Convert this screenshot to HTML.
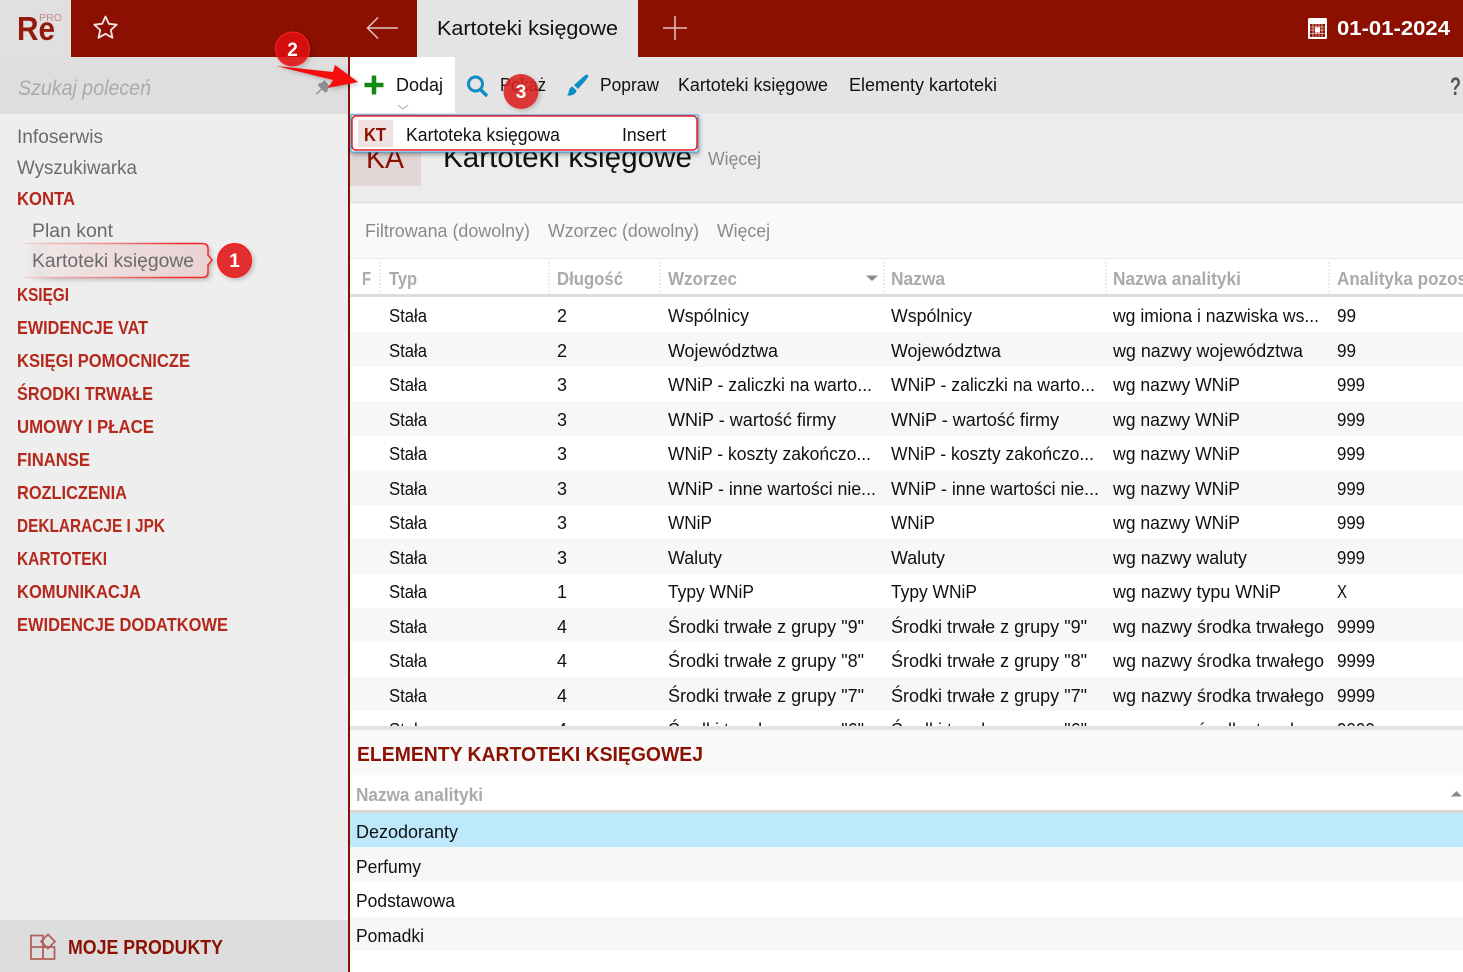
<!DOCTYPE html>
<html lang="pl"><head><meta charset="utf-8"><title>Kartoteki księgowe</title>
<style>
html,body{margin:0;padding:0;background:#fff;width:1463px;height:972px;overflow:hidden}
svg{display:block;position:absolute;left:0;top:0}
text{font-family:"Liberation Sans",sans-serif;font-size:18px;fill:#111;white-space:pre}
.n{fill:#6b6b6b;font-size:19px}
.k{fill:#b5281c;font-size:18px;font-weight:bold;stroke:none}
.h{fill:#aaa;font-size:18px;font-weight:bold}
.f{fill:#8a8a8a;font-size:18px}
</style></head><body>
<svg width="1463" height="972" viewBox="0 0 1463 972" lengthAdjust="spacingAndGlyphs">
<defs>
<linearGradient id="g1" gradientUnits="userSpaceOnUse" x1="24" x2="208" y1="0" y2="0"><stop offset="0" stop-color="#f0e4e4" stop-opacity="0"/><stop offset=".15" stop-color="#f0e4e4"/><stop offset="1" stop-color="#e9d2d2"/></linearGradient>
<linearGradient id="g2" gradientUnits="userSpaceOnUse" x1="24" x2="208" y1="0" y2="0"><stop offset="0" stop-color="#f02a2a" stop-opacity=".1"/><stop offset=".45" stop-color="#f02a2a" stop-opacity=".45"/><stop offset=".85" stop-color="#f02a2a"/></linearGradient>
<filter id="sh" x="-20%" y="-30%" width="140%" height="170%"><feDropShadow dx="1" dy="2" stdDeviation="2.500" flood-color="#000" flood-opacity=".35"/></filter>
<filter id="sh2" x="-20%" y="-40%" width="140%" height="180%"><feDropShadow dx="2" dy="2" stdDeviation="2" flood-color="#000" flood-opacity=".22"/></filter>
<clipPath id="r13"><rect x="350" y="711" width="1113" height="15"/></clipPath>
<clipPath id="c5"><rect x="1330" y="259" width="133" height="40"/></clipPath>
</defs>

<!-- backgrounds -->
<rect x="0" y="0" width="1463" height="57" fill="#8b1002"/>
<rect x="0" y="0" width="71" height="57" fill="#e0e0e0"/>
<rect x="417" y="0" width="221" height="57" fill="#e4e4e4"/>
<rect x="0" y="57" width="348" height="57" fill="#dedede"/>
<rect x="0" y="114" width="348" height="806" fill="#eeeeee"/>
<rect x="0" y="920" width="348" height="52" fill="#dddddd"/>
<rect x="348" y="57" width="2" height="915" fill="#8b1002"/>
<rect x="350" y="57" width="1113" height="56" fill="#e4e4e4"/>
<rect x="350" y="57" width="105" height="57" fill="#ffffff"/>
<rect x="350" y="113" width="1113" height="89" fill="#ececec"/>
<rect x="350" y="202" width="1113" height="1" fill="#dcdcdc"/>
<rect x="350" y="203" width="1113" height="55" fill="#f9f9f9"/>
<rect x="350" y="258" width="1113" height="1" fill="#eaeaea"/>
<rect x="350" y="259" width="1113" height="467" fill="#ffffff"/>
<rect x="350" y="294" width="1113" height="3" fill="#dddddd"/>
<rect x="350" y="332" width="1113" height="35" fill="#f7f7f7"/>
<rect x="350" y="401" width="1113" height="35" fill="#f7f7f7"/>
<rect x="350" y="470" width="1113" height="35" fill="#f7f7f7"/>
<rect x="350" y="539" width="1113" height="35" fill="#f7f7f7"/>
<rect x="350" y="608" width="1113" height="34" fill="#f7f7f7"/>
<rect x="350" y="677" width="1113" height="34" fill="#f7f7f7"/>
<rect x="350" y="726" width="1113" height="4" fill="#e3e3e3"/>
<rect x="350" y="730" width="1113" height="45" fill="#f9f9f9"/>
<rect x="350" y="775" width="1113" height="35" fill="#ffffff"/>
<rect x="350" y="810" width="1113" height="3" fill="#d9d9d9"/>
<rect x="350" y="813" width="1113" height="34" fill="#bee9fd"/>
<rect x="350" y="847" width="1113" height="125" fill="#ffffff"/>
<rect x="350" y="847" width="1113" height="35" fill="#f7f7f7"/>
<rect x="350" y="917" width="1113" height="34" fill="#f7f7f7"/>

<!-- top bar -->
<text x="17" y="40" style="font-size:33px;fill:#941a0e" textLength="38" lengthAdjust="spacingAndGlyphs" font-weight="bold">Re</text>
<text x="39" y="21" style="font-size:10.500px;fill:#c98a85" textLength="23" lengthAdjust="spacingAndGlyphs">PRO</text>
<path d="M105.500 16.500l3.300 7.300 7.900.9-5.900 5.300 1.700 7.800-7-4-7 4 1.700-7.800-5.900-5.300 7.900-.9z" fill="none" stroke="#f3e3e1" stroke-width="1.800" stroke-linejoin="round"/>
<path d="M398 28H368M378 17.500L367.500 28 378 38.500" fill="none" stroke="#e3c3bf" stroke-width="1.500"/>
<text x="437" y="35" style="font-size:20px;fill:#111" textLength="181" lengthAdjust="spacingAndGlyphs">Kartoteki księgowe</text>
<path d="M675 16V40M663 28H687" fill="none" stroke="#e3c3bf" stroke-width="1.500"/>
<rect x="1308" y="18" width="19" height="21" rx="1.500" fill="#fff"/>
<rect x="1310" y="24" width="15" height="13" fill="#8b1002"/>
<path d="M1313 24v13M1316 24v13M1319 24v13M1322 24v13M1310 27h15M1310 30h15M1310 33.500h15" stroke="#e9c9c5" stroke-width=".8"/>
<rect x="1315" y="27.500" width="5" height="5" fill="#fff"/>
<text x="1337" y="35" style="font-size:20px;font-weight:bold;fill:#fff" textLength="113" lengthAdjust="spacingAndGlyphs">01-01-2024</text>

<!-- sidebar -->
<text x="18" y="95" style="font-size:21px;font-style:italic;fill:#aaa" textLength="133" lengthAdjust="spacingAndGlyphs">Szukaj poleceń</text>
<path d="M324 80l6.500 6.500-2 1-1.500 4.500-2 .5-3-3-5 5-1-1 5-5-3-3 .5-2 4.500-1.500z" fill="#8d8d8d"/>
<text class="n" x="17" y="143" textLength="86" lengthAdjust="spacingAndGlyphs">Infoserwis</text>
<text class="n" x="17" y="174" textLength="120" lengthAdjust="spacingAndGlyphs">Wyszukiwarka</text>
<text class="k" x="17" y="205" textLength="58" lengthAdjust="spacingAndGlyphs">KONTA</text>
<text class="n" x="32" y="237" textLength="81" lengthAdjust="spacingAndGlyphs">Plan kont</text>

<path d="M24 243.500H202q6 0 6 5V255l4 5-4 5v7.500q0 5-6 5H24" fill="url(#g1)" stroke="url(#g2)" stroke-width="1.500" filter="url(#sh2)"/>
<text class="n" x="32" y="267" textLength="162" lengthAdjust="spacingAndGlyphs">Kartoteki księgowe</text>
<text class="k" x="17" y="301" textLength="52" lengthAdjust="spacingAndGlyphs">KSIĘGI</text>
<text class="k" x="17" y="334" textLength="131" lengthAdjust="spacingAndGlyphs">EWIDENCJE VAT</text>
<text class="k" x="17" y="367" textLength="173" lengthAdjust="spacingAndGlyphs">KSIĘGI POMOCNICZE</text>
<text class="k" x="17" y="400" textLength="136" lengthAdjust="spacingAndGlyphs">ŚRODKI TRWAŁE</text>
<text class="k" x="17" y="433" textLength="137" lengthAdjust="spacingAndGlyphs">UMOWY I PŁACE</text>
<text class="k" x="17" y="466" textLength="73" lengthAdjust="spacingAndGlyphs">FINANSE</text>
<text class="k" x="17" y="499" textLength="110" lengthAdjust="spacingAndGlyphs">ROZLICZENIA</text>
<text class="k" x="17" y="532" textLength="148" lengthAdjust="spacingAndGlyphs">DEKLARACJE I JPK</text>
<text class="k" x="17" y="565" textLength="90" lengthAdjust="spacingAndGlyphs">KARTOTEKI</text>
<text class="k" x="17" y="598" textLength="124" lengthAdjust="spacingAndGlyphs">KOMUNIKACJA</text>
<text class="k" x="17" y="631" textLength="211" lengthAdjust="spacingAndGlyphs">EWIDENCJE DODATKOWE</text>

<g fill="none" stroke="#b0605a" stroke-width="1.800">
<path d="M43 947H31V935.500H43V947V959H31V947M43 947H54.500V959H43"/>
<path d="M48 934.500l7 7-7 7-7-7z"/>
</g>
<text x="68" y="954" style="font-size:20px;fill:#8b1002;font-weight:bold" textLength="155" lengthAdjust="spacingAndGlyphs">MOJE PRODUKTY</text>

<!-- toolbar -->
<path d="M374 75.500V94.500M364.500 85H383.500" stroke="#128a12" stroke-width="4.500"/>
<text x="396" y="91" textLength="47" lengthAdjust="spacingAndGlyphs">Dodaj</text>
<path d="M398 105l5 4 5-4" fill="none" stroke="#aaa" stroke-width="1"/>
<circle cx="475.500" cy="84" r="7" fill="none" stroke="#0e8fc2" stroke-width="3"/>
<path d="M480.500 89.500l6.500 6.500" stroke="#0e8fc2" stroke-width="3.500"/>
<text x="500" y="91" textLength="46" lengthAdjust="spacingAndGlyphs">Pokaż</text>
<path d="M588 75c-1-1-3 0-5 2l-9 8 4 4 8-9c2-3 3-4 2-5z" fill="#0e8fc2"/>
<path d="M572.500 86.500l4 4c-.500 3.500-4 5.500-9.500 5 1.500-1.500 1.500-3 2-5 .500-2 1.500-3.500 3.500-4z" fill="#0e8fc2"/>
<text x="600" y="91" textLength="59" lengthAdjust="spacingAndGlyphs">Popraw</text>
<text x="678" y="91" textLength="150" lengthAdjust="spacingAndGlyphs">Kartoteki księgowe</text>
<text x="849" y="91" textLength="148" lengthAdjust="spacingAndGlyphs">Elementy kartoteki</text>
<text x="1450" y="95" style="font-size:25px;font-weight:bold;fill:#555" textLength="11" lengthAdjust="spacingAndGlyphs">?</text>

<!-- title -->
<rect x="350" y="114" width="71" height="72" fill="#e2d5d5"/>
<text x="366" y="168" style="font-size:30px;fill:#8b1002" textLength="38" lengthAdjust="spacingAndGlyphs">KA</text>
<text x="443" y="167" style="font-size:30px" textLength="249" lengthAdjust="spacingAndGlyphs">Kartoteki księgowe</text>
<text class="f" x="708" y="165" textLength="53" lengthAdjust="spacingAndGlyphs">Więcej</text>

<!-- filters -->
<text class="f" x="365" y="237" textLength="165" lengthAdjust="spacingAndGlyphs">Filtrowana (dowolny)</text>
<text class="f" x="548" y="237" textLength="151" lengthAdjust="spacingAndGlyphs">Wzorzec (dowolny)</text>
<text class="f" x="717" y="237" textLength="53" lengthAdjust="spacingAndGlyphs">Więcej</text>

<!-- table header -->
<text class="h" x="362" y="285" textLength="9" lengthAdjust="spacingAndGlyphs">F</text>
<text class="h" x="389" y="285" textLength="28" lengthAdjust="spacingAndGlyphs">Typ</text>
<text class="h" x="557" y="285" textLength="66" lengthAdjust="spacingAndGlyphs">Długość</text>
<text class="h" x="668" y="285" textLength="69" lengthAdjust="spacingAndGlyphs">Wzorzec</text>
<path d="M866 275.500H878L872 281z" fill="#8a8a8a"/>
<text class="h" x="891" y="285" textLength="54" lengthAdjust="spacingAndGlyphs">Nazwa</text>
<text class="h" x="1113" y="285" textLength="128" lengthAdjust="spacingAndGlyphs">Nazwa analityki</text>
<g clip-path="url(#c5)"><text class="h" x="1337" y="285" textLength="130" lengthAdjust="spacingAndGlyphs">Analityka pozos</text></g>
<path d="M380 262V295M549 262V295M660 262V295M884 262V295M1106 262V295M1329 262V295" stroke="#d0d0d0" stroke-dasharray="1.500 2"/>

<!-- rows -->
<text x="389" y="322" textLength="38" lengthAdjust="spacingAndGlyphs">Stała</text><text x="557" y="322">2</text><text x="668" y="322" textLength="81" lengthAdjust="spacingAndGlyphs">Wspólnicy</text><text x="891" y="322" textLength="81" lengthAdjust="spacingAndGlyphs">Wspólnicy</text><text x="1113" y="322" textLength="206" lengthAdjust="spacingAndGlyphs">wg imiona i nazwiska ws...</text><text x="1337" y="322" textLength="19" lengthAdjust="spacingAndGlyphs">99</text>
<text x="389" y="357" textLength="38" lengthAdjust="spacingAndGlyphs">Stała</text><text x="557" y="357">2</text><text x="668" y="357" textLength="110" lengthAdjust="spacingAndGlyphs">Województwa</text><text x="891" y="357" textLength="110" lengthAdjust="spacingAndGlyphs">Województwa</text><text x="1113" y="357" textLength="190" lengthAdjust="spacingAndGlyphs">wg nazwy województwa</text><text x="1337" y="357" textLength="19" lengthAdjust="spacingAndGlyphs">99</text>
<text x="389" y="391" textLength="38" lengthAdjust="spacingAndGlyphs">Stała</text><text x="557" y="391">3</text><text x="668" y="391" textLength="204" lengthAdjust="spacingAndGlyphs">WNiP - zaliczki na warto...</text><text x="891" y="391" textLength="204" lengthAdjust="spacingAndGlyphs">WNiP - zaliczki na warto...</text><text x="1113" y="391" textLength="127" lengthAdjust="spacingAndGlyphs">wg nazwy WNiP</text><text x="1337" y="391" textLength="28" lengthAdjust="spacingAndGlyphs">999</text>
<text x="389" y="426" textLength="38" lengthAdjust="spacingAndGlyphs">Stała</text><text x="557" y="426">3</text><text x="668" y="426" textLength="168" lengthAdjust="spacingAndGlyphs">WNiP - wartość firmy</text><text x="891" y="426" textLength="168" lengthAdjust="spacingAndGlyphs">WNiP - wartość firmy</text><text x="1113" y="426" textLength="127" lengthAdjust="spacingAndGlyphs">wg nazwy WNiP</text><text x="1337" y="426" textLength="28" lengthAdjust="spacingAndGlyphs">999</text>
<text x="389" y="460" textLength="38" lengthAdjust="spacingAndGlyphs">Stała</text><text x="557" y="460">3</text><text x="668" y="460" textLength="203" lengthAdjust="spacingAndGlyphs">WNiP - koszty zakończo...</text><text x="891" y="460" textLength="203" lengthAdjust="spacingAndGlyphs">WNiP - koszty zakończo...</text><text x="1113" y="460" textLength="127" lengthAdjust="spacingAndGlyphs">wg nazwy WNiP</text><text x="1337" y="460" textLength="28" lengthAdjust="spacingAndGlyphs">999</text>
<text x="389" y="495" textLength="38" lengthAdjust="spacingAndGlyphs">Stała</text><text x="557" y="495">3</text><text x="668" y="495" textLength="208" lengthAdjust="spacingAndGlyphs">WNiP - inne wartości nie...</text><text x="891" y="495" textLength="208" lengthAdjust="spacingAndGlyphs">WNiP - inne wartości nie...</text><text x="1113" y="495" textLength="127" lengthAdjust="spacingAndGlyphs">wg nazwy WNiP</text><text x="1337" y="495" textLength="28" lengthAdjust="spacingAndGlyphs">999</text>
<text x="389" y="529" textLength="38" lengthAdjust="spacingAndGlyphs">Stała</text><text x="557" y="529">3</text><text x="668" y="529" textLength="44" lengthAdjust="spacingAndGlyphs">WNiP</text><text x="891" y="529" textLength="44" lengthAdjust="spacingAndGlyphs">WNiP</text><text x="1113" y="529" textLength="127" lengthAdjust="spacingAndGlyphs">wg nazwy WNiP</text><text x="1337" y="529" textLength="28" lengthAdjust="spacingAndGlyphs">999</text>
<text x="389" y="564" textLength="38" lengthAdjust="spacingAndGlyphs">Stała</text><text x="557" y="564">3</text><text x="668" y="564" textLength="54" lengthAdjust="spacingAndGlyphs">Waluty</text><text x="891" y="564" textLength="54" lengthAdjust="spacingAndGlyphs">Waluty</text><text x="1113" y="564" textLength="134" lengthAdjust="spacingAndGlyphs">wg nazwy waluty</text><text x="1337" y="564" textLength="28" lengthAdjust="spacingAndGlyphs">999</text>
<text x="389" y="598" textLength="38" lengthAdjust="spacingAndGlyphs">Stała</text><text x="557" y="598">1</text><text x="668" y="598" textLength="86" lengthAdjust="spacingAndGlyphs">Typy WNiP</text><text x="891" y="598" textLength="86" lengthAdjust="spacingAndGlyphs">Typy WNiP</text><text x="1113" y="598" textLength="168" lengthAdjust="spacingAndGlyphs">wg nazwy typu WNiP</text><text x="1337" y="598" textLength="10" lengthAdjust="spacingAndGlyphs">X</text>
<text x="389" y="633" textLength="38" lengthAdjust="spacingAndGlyphs">Stała</text><text x="557" y="633">4</text><text x="668" y="633" textLength="196" lengthAdjust="spacingAndGlyphs">Środki trwałe z grupy "9"</text><text x="891" y="633" textLength="196" lengthAdjust="spacingAndGlyphs">Środki trwałe z grupy "9"</text><text x="1113" y="633" textLength="211" lengthAdjust="spacingAndGlyphs">wg nazwy środka trwałego</text><text x="1337" y="633" textLength="38" lengthAdjust="spacingAndGlyphs">9999</text>
<text x="389" y="667" textLength="38" lengthAdjust="spacingAndGlyphs">Stała</text><text x="557" y="667">4</text><text x="668" y="667" textLength="196" lengthAdjust="spacingAndGlyphs">Środki trwałe z grupy "8"</text><text x="891" y="667" textLength="196" lengthAdjust="spacingAndGlyphs">Środki trwałe z grupy "8"</text><text x="1113" y="667" textLength="211" lengthAdjust="spacingAndGlyphs">wg nazwy środka trwałego</text><text x="1337" y="667" textLength="38" lengthAdjust="spacingAndGlyphs">9999</text>
<text x="389" y="702" textLength="38" lengthAdjust="spacingAndGlyphs">Stała</text><text x="557" y="702">4</text><text x="668" y="702" textLength="196" lengthAdjust="spacingAndGlyphs">Środki trwałe z grupy "7"</text><text x="891" y="702" textLength="196" lengthAdjust="spacingAndGlyphs">Środki trwałe z grupy "7"</text><text x="1113" y="702" textLength="211" lengthAdjust="spacingAndGlyphs">wg nazwy środka trwałego</text><text x="1337" y="702" textLength="38" lengthAdjust="spacingAndGlyphs">9999</text>
<g clip-path="url(#r13)"><text x="389" y="736" textLength="38" lengthAdjust="spacingAndGlyphs">Stała</text><text x="557" y="736">4</text><text x="668" y="736" textLength="196" lengthAdjust="spacingAndGlyphs">Środki trwałe z grupy "6"</text><text x="891" y="736" textLength="196" lengthAdjust="spacingAndGlyphs">Środki trwałe z grupy "6"</text><text x="1113" y="736" textLength="211" lengthAdjust="spacingAndGlyphs">wg nazwy środka trwałego</text><text x="1337" y="736" textLength="38" lengthAdjust="spacingAndGlyphs">9999</text></g>

<!-- lower section -->
<text x="357" y="761" style="font-size:20px;font-weight:bold;fill:#8b1002" textLength="346" lengthAdjust="spacingAndGlyphs">ELEMENTY KARTOTEKI KSIĘGOWEJ</text>
<text class="h" x="356" y="801" textLength="127" lengthAdjust="spacingAndGlyphs">Nazwa analityki</text>
<path d="M1451 796.500H1462L1456.500 791z" fill="#8a8a8a"/>
<text x="356" y="838" textLength="102" lengthAdjust="spacingAndGlyphs">Dezodoranty</text>
<text x="356" y="873" textLength="65" lengthAdjust="spacingAndGlyphs">Perfumy</text>
<text x="356" y="907" textLength="99" lengthAdjust="spacingAndGlyphs">Podstawowa</text>
<text x="356" y="942" textLength="68" lengthAdjust="spacingAndGlyphs">Pomadki</text>

<!-- popup -->
<rect x="351" y="115" width="347" height="37" fill="#fff" stroke="#29a0e0" stroke-width="1" filter="url(#sh)"/>
<rect x="352" y="116" width="345" height="34" rx="4" fill="#fff" stroke="#ee1c25" stroke-width="1.500"/>
<rect x="358" y="120" width="35" height="27" fill="#f0e2e2"/>
<text x="364" y="141" style="font-size:18px;font-weight:bold;fill:#8b1002" textLength="22" lengthAdjust="spacingAndGlyphs">KT</text>
<text x="406" y="141" textLength="154" lengthAdjust="spacingAndGlyphs">Kartoteka księgowa</text>
<text x="622" y="141" textLength="44" lengthAdjust="spacingAndGlyphs">Insert</text>

<!-- annotations -->
<path d="M276 66L333 72 335 65 358 82 328 88 333 80z" fill="#f60808" filter="url(#sh2)"/>
<circle cx="292.500" cy="49" r="17" fill="#e00a0a" fill-opacity=".85" stroke="#f22" stroke-width="1" filter="url(#sh2)"/>
<text x="292.500" y="56" text-anchor="middle" style="font-size:19px;font-weight:bold;fill:#fff">2</text>
<circle cx="521" cy="91.500" r="17.500" fill="#dc1e1e" fill-opacity=".85" filter="url(#sh2)"/>
<text x="521" y="98" text-anchor="middle" style="font-size:19px;font-weight:bold;fill:#fff">3</text>
<circle cx="234.500" cy="260.500" r="17" fill="#e22f2f" stroke="#f11" stroke-width="1" filter="url(#sh2)"/>
<text x="234.500" y="267" text-anchor="middle" style="font-size:19px;font-weight:bold;fill:#fff">1</text>
</svg>
</body></html>
